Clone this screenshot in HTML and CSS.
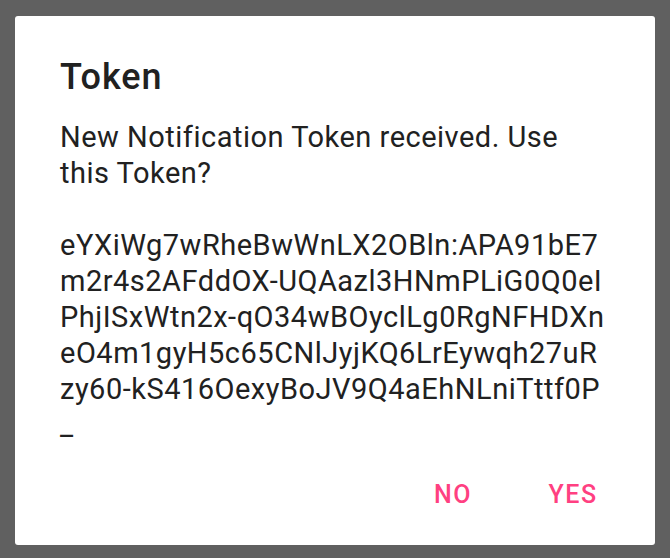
FILE: index.html
```html
<!DOCTYPE html>
<html>
<head>
<meta charset="utf-8">
<link rel="stylesheet" href="styles.css">
</head>
<body>
<div class="dialog">
  <h1 class="title">Token</h1>
  <p class="message">New Notification Token received. Use<br>this Token?<br><br>eYXiWg7wRheBwWnLX2OBln:APA91bE7<br>m2r4s2AFddOX-UQAazl3HNmPLiG0Q0eI<br>PhjISxWtn2x-qO34wBOyclLg0RgNFHDXn<br>eO4m1gyH5c65CNlJyjKQ6LrEywqh27uR<br>zy60-kS416OexyBoJV9Q4aEhNLniTttf0P<br>_</p>
  <div class="actions">
    <button class="btn">NO</button>
    <button class="btn">YES</button>
  </div>
</div>
</body>
</html>
```

FILE: styles.css
```css
html, body {
  margin: 0;
  padding: 0;
  background: #606060;
}
body {
  padding: 16px 15px 0 15px;
  font-family: Roboto, "Liberation Sans", sans-serif;
}
.dialog {
  background: #ffffff;
  border-radius: 3px;
  padding: 41px 30px 19px 45px;
  display: flex;
  flex-direction: column;
}
.title {
  margin: 0;
  font-size: 36px;
  font-weight: 500;
  line-height: 41px;
  letter-spacing: 1px;
  color: #212121;
}
.message {
  margin: 21px 0 0 0;
  font-size: 29px;
  font-weight: 400;
  line-height: 36px;
  letter-spacing: 0.5px;
  color: #212121;
  white-space: nowrap;
}
.actions {
  display: flex;
  justify-content: flex-end;
  gap: 8px;
  margin: 20px -4px 0 0;
}
.btn {
  min-width: 112px;
  height: 63px;
  padding: 0 14px;
  border: none;
  background: transparent;
  font-family: Roboto, "Liberation Sans", sans-serif;
  font-size: 25px;
  font-weight: 500;
  letter-spacing: 1.5px;
  color: #ff4081;
  text-align: center;
  line-height: 63px;
}
```
